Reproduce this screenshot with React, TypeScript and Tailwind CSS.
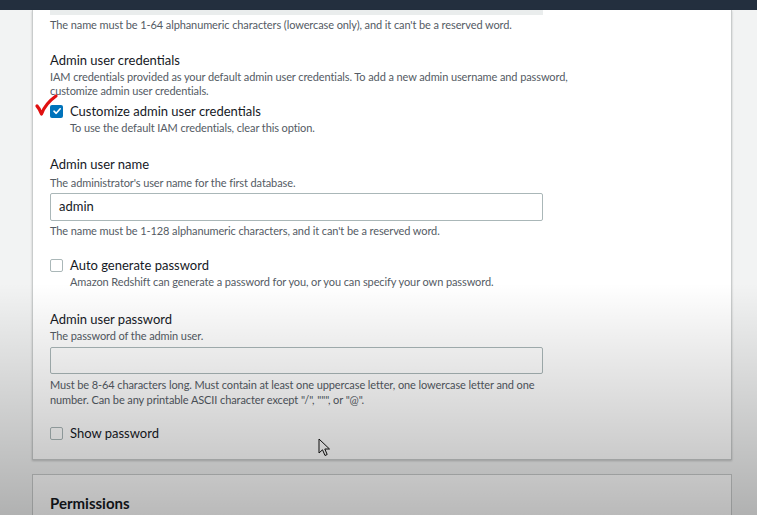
import React from "react";

function Checkbox({ checked }: { checked?: boolean }) {
  if (checked) {
    return (
      <div className="w-[13px] h-[13px] rounded-[2px] bg-[#0073bb] flex items-center justify-center shrink-0">
        <svg width="10" height="10" viewBox="0 0 10 10">
          <path d="M2 5.2 L4.2 7.3 L8.2 2.8" fill="none" stroke="white" strokeWidth="1.6" strokeLinecap="round" strokeLinejoin="round" />
        </svg>
      </div>
    );
  }
  return <div className="w-[13px] h-[13px] rounded-[2px] border border-[#aab7b8] bg-white shrink-0" />;
}

export default function App() {
  return (
    <div
      className="relative w-[757px] h-[515px] overflow-hidden bg-[#f2f3f3] text-[#16191f]"
      style={{ fontFamily: "Lato, 'Open Sans', 'Liberation Sans', sans-serif" }}
    >
      <div className="h-[10px] bg-[#232f3e]" />
      <div className="flex">
        <div className="w-[32px] shrink-0" />
        <div className="w-[700px] shrink-0">
          <div className="h-[450px] bg-white border-x border-b border-[#c9cccc] shadow-[0_1px_2px_rgba(0,0,0,0.2)] px-[17px]">
            <div className="h-[5px] w-[493px] bg-[#eaeded]" />
            <div className="mt-[3px] text-[11px] leading-[14px] tracking-[-0.1px] text-[#545b64]">
              The name must be 1-64 alphanumeric characters (lowercase only), and it can't be a reserved word.
            </div>

            <div className="mt-[19px] text-[13px] leading-[18px]">Admin user credentials</div>
            <div className="mt-[1px] text-[11px] leading-[14px] tracking-[-0.1px] text-[#545b64] w-[540px]">
              IAM credentials provided as your default admin user credentials. To add a new admin username and password,
              customize admin user credentials.
            </div>
            <div className="mt-[4px] flex items-center gap-[7px] h-[18px]">
              <Checkbox checked />
              <span className="text-[13px] leading-[18px]">Customize admin user credentials</span>
            </div>
            <div className="mt-[1px] pl-[20px] text-[11px] leading-[14px] tracking-[-0.1px] text-[#545b64]">
              To use the default IAM credentials, clear this option.
            </div>

            <div className="mt-[20px] text-[13px] leading-[18px]">Admin user name</div>
            <div className="mt-[3px] text-[11px] leading-[14px] tracking-[-0.1px] text-[#545b64]">
              The administrator's user name for the first database.
            </div>
            <div className="mt-[3px] w-[493px] h-[28px] border border-[#aab7b8] rounded-[2px] flex items-center px-[8px] text-[13px]">
              admin
            </div>
            <div className="mt-[3px] text-[11px] leading-[14px] tracking-[-0.1px] text-[#545b64]">
              The name must be 1-128 alphanumeric characters, and it can't be a reserved word.
            </div>

            <div className="mt-[18px] flex items-center gap-[7px] h-[18px]">
              <Checkbox />
              <span className="text-[13px] leading-[18px]">Auto generate password</span>
            </div>
            <div className="mt-[1px] pl-[20px] text-[11px] leading-[14px] tracking-[-0.1px] text-[#545b64]">
              Amazon Redshift can generate a password for you, or you can specify your own password.
            </div>

            <div className="mt-[21px] text-[13px] leading-[18px]">Admin user password</div>
            <div className="mt-[1px] text-[11px] leading-[14px] tracking-[-0.1px] text-[#545b64]">The password of the admin user.</div>
            <div className="mt-[4px] w-[493px] h-[27px] border border-[#aab7b8] rounded-[2px] bg-white" />
            <div className="mt-[3px] text-[11px] leading-[15px] tracking-[-0.1px] text-[#545b64] w-[500px]">
              Must be 8-64 characters long. Must contain at least one uppercase letter, one lowercase letter and one
              number. Can be any printable ASCII character except "/", """, or "@".
            </div>

            <div className="mt-[17px] flex items-center gap-[7px] h-[18px]">
              <Checkbox />
              <span className="text-[13px] leading-[18px]">Show password</span>
            </div>
          </div>

          <div className="mt-[14px] h-[60px] bg-white border-x border-t border-[#c9cccc] px-[17px] pt-[18px]">
            <div className="text-[15px] leading-[20px] font-bold">Permissions</div>
          </div>
        </div>
      </div>

      {/* hand-drawn red check annotation */}
      <svg className="absolute left-[33px] top-[93px]" width="26" height="26" viewBox="0 0 26 26">
        <path d="M4 13 C6 15 7 17 8.5 21 C11 14 16 8 23 3" fill="none" stroke="#e01010" strokeWidth="3.2" strokeLinecap="round" strokeLinejoin="round" />
      </svg>

      {/* mouse cursor */}
      <svg className="absolute left-[318px] top-[438px]" width="14" height="20" viewBox="0 0 14 20">
        <path d="M1 1 L1 15 L4.5 11.8 L7 17.5 L9.2 16.5 L6.8 11 L11.5 11 Z" fill="white" stroke="#111" strokeWidth="1" strokeLinejoin="round" />
      </svg>

      {/* video vignette */}
      <div className="pointer-events-none absolute inset-0 bg-gradient-to-b from-transparent via-transparent via-55% to-[rgba(0,0,0,0.27)]" />
    </div>
  );
}
